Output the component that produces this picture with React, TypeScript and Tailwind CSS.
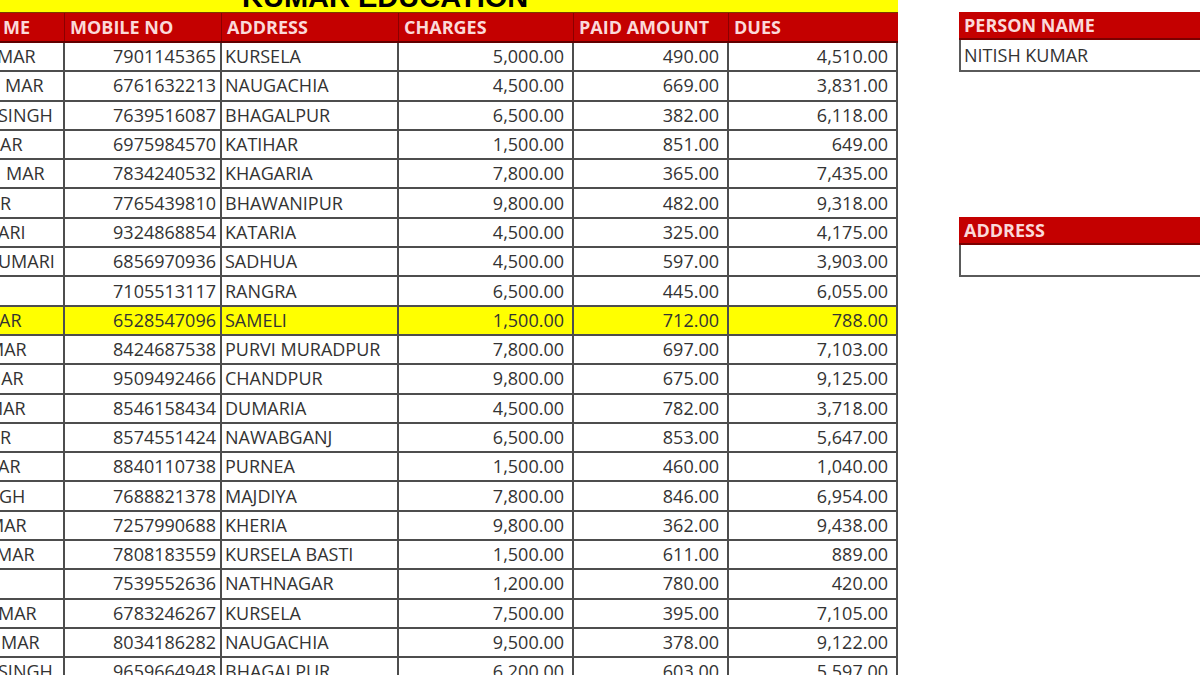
// Fee register sheet: student dues table with a lookup panel on the right.

interface FeeRow {
  /** Visible tail of the student name (column is cut at the left edge) */
  name: string;
  /** Shift so the first letter is clipped like in the sheet */
  shift: string;
  mobile: string;
  address: string;
  charges: string;
  paid: string;
  dues: string;
  highlight?: boolean;
}

const rows: FeeRow[] = [
  { name: "MAR", shift: "-ml-[3px]", mobile: "7901145365", address: "KURSELA", charges: "5,000.00", paid: "490.00", dues: "4,510.00" },
  { name: "MAR", shift: "ml-[5px]", mobile: "6761632213", address: "NAUGACHIA", charges: "4,500.00", paid: "669.00", dues: "3,831.00" },
  { name: "SINGH", shift: "-ml-[2px]", mobile: "7639516087", address: "BHAGALPUR", charges: "6,500.00", paid: "382.00", dues: "6,118.00" },
  { name: "AR", shift: "ml-0", mobile: "6975984570", address: "KATIHAR", charges: "1,500.00", paid: "851.00", dues: "649.00" },
  { name: "MAR", shift: "ml-[6px]", mobile: "7834240532", address: "KHAGARIA", charges: "7,800.00", paid: "365.00", dues: "7,435.00" },
  { name: "R", shift: "ml-0", mobile: "7765439810", address: "BHAWANIPUR", charges: "9,800.00", paid: "482.00", dues: "9,318.00" },
  { name: "ARI", shift: "-ml-[2px]", mobile: "9324868854", address: "KATARIA", charges: "4,500.00", paid: "325.00", dues: "4,175.00" },
  { name: "UMARI", shift: "-ml-[2px]", mobile: "6856970936", address: "SADHUA", charges: "4,500.00", paid: "597.00", dues: "3,903.00" },
  { name: "", shift: "ml-0", mobile: "7105513117", address: "RANGRA", charges: "6,500.00", paid: "445.00", dues: "6,055.00" },
  { name: "AR", shift: "-ml-[1px]", mobile: "6528547096", address: "SAMELI", charges: "1,500.00", paid: "712.00", dues: "788.00", highlight: true },
  { name: "MAR", shift: "-ml-[12px]", mobile: "8424687538", address: "PURVI MURADPUR", charges: "7,800.00", paid: "697.00", dues: "7,103.00" },
  { name: "MAR", shift: "-ml-[15px]", mobile: "9509492466", address: "CHANDPUR", charges: "9,800.00", paid: "675.00", dues: "9,125.00" },
  { name: "MAR", shift: "-ml-[13px]", mobile: "8546158434", address: "DUMARIA", charges: "4,500.00", paid: "782.00", dues: "3,718.00" },
  { name: "R", shift: "ml-0", mobile: "8574551424", address: "NAWABGANJ", charges: "6,500.00", paid: "853.00", dues: "5,647.00" },
  { name: "AR", shift: "-ml-[2px]", mobile: "8840110738", address: "PURNEA", charges: "1,500.00", paid: "460.00", dues: "1,040.00" },
  { name: "GH", shift: "-ml-[1px]", mobile: "7688821378", address: "MAJDIYA", charges: "7,800.00", paid: "846.00", dues: "6,954.00" },
  { name: "MAR", shift: "-ml-[12px]", mobile: "7257990688", address: "KHERIA", charges: "9,800.00", paid: "362.00", dues: "9,438.00" },
  { name: "MAR", shift: "-ml-[4px]", mobile: "7808183559", address: "KURSELA BASTI", charges: "1,500.00", paid: "611.00", dues: "889.00" },
  { name: "", shift: "ml-0", mobile: "7539552636", address: "NATHNAGAR", charges: "1,200.00", paid: "780.00", dues: "420.00" },
  { name: "MAR", shift: "-ml-[2px]", mobile: "6783246267", address: "KURSELA", charges: "7,500.00", paid: "395.00", dues: "7,105.00" },
  { name: "MAR", shift: "ml-[1px]", mobile: "8034186282", address: "NAUGACHIA", charges: "9,500.00", paid: "378.00", dues: "9,122.00" },
  { name: "SINGH", shift: "-ml-[2px]", mobile: "9659664948", address: "BHAGALPUR", charges: "6,200.00", paid: "603.00", dues: "5,597.00" },
];

const cell = "flex h-full shrink-0 items-center overflow-hidden border-r-2 border-[#4d4d4d]";
const head = "flex h-full shrink-0 items-center border-r border-[#8a0000] pl-[5px]";

function LookupBox({ label, value }: { label: string; value: string }) {
  return (
    <div className="w-[260px]">
      <div className="flex h-[28px] items-center border-b-2 border-[#7a0000] bg-[#c40000] pl-[5px] text-[18px] font-bold text-[#fbd9d9]">
        {label}
      </div>
      <div className="flex h-[32px] items-center border-b-2 border-l-2 border-[#5a5a5a] bg-white pl-[3px] text-[18px] text-[#333]">
        {value}
      </div>
    </div>
  );
}

export default function App() {
  return (
    <div className="flex h-[675px] w-[1200px] overflow-hidden bg-white font-['Open_Sans',sans-serif]">
      {/* Register table */}
      <div className="w-[898px] shrink-0">
        <div className="h-[13px] overflow-hidden border-b border-[#7a3a00] bg-[#ffff00] pl-[242px]">
          <div className="-mt-[17px] font-['Liberation_Sans',sans-serif] text-[29px] leading-none font-bold text-black">
            KUMAR EDUCATION
          </div>
        </div>

        <div className="flex h-[30px] border-b-2 border-[#600000] bg-[#c40000] text-[18px] font-bold text-[#fbd9d9]">
          <div className={`${head} w-[65px] overflow-hidden pl-0`}>
            <span className="-ml-[2px]">ME</span>
          </div>
          <div className={`${head} w-[157px]`}>MOBILE NO</div>
          <div className={`${head} w-[177px]`}>ADDRESS</div>
          <div className={`${head} w-[175px]`}>CHARGES</div>
          <div className={`${head} w-[155px]`}>PAID AMOUNT</div>
          <div className={`${head} w-[169px] border-r-0`}>DUES</div>
        </div>

        {rows.map((r) => (
          <div
            key={r.mobile}
            className={`flex h-[29.3px] border-b-2 border-[#4d4d4d] text-[18px] text-[#333] ${
              r.highlight ? "bg-[#ffff00]" : "bg-white"
            }`}
          >
            <div className={`${cell} w-[65px]`}>
              <span className={`whitespace-nowrap ${r.shift}`}>{r.name}</span>
            </div>
            <div className={`${cell} w-[157px] justify-end pr-[4px]`}>{r.mobile}</div>
            <div className={`${cell} w-[177px] pl-[3px] whitespace-nowrap`}>{r.address}</div>
            <div className={`${cell} w-[175px] justify-end pr-[8px]`}>{r.charges}</div>
            <div className={`${cell} w-[155px] justify-end pr-[8px]`}>{r.paid}</div>
            <div className={`${cell} w-[169px] justify-end pr-[8px]`}>{r.dues}</div>
          </div>
        ))}
      </div>

      {/* Lookup panel */}
      <div className="ml-[61px] flex flex-col gap-[145px] pt-[12px]">
        <LookupBox label="PERSON NAME" value="NITISH KUMAR" />
        <LookupBox label="ADDRESS" value="" />
      </div>
    </div>
  );
}
